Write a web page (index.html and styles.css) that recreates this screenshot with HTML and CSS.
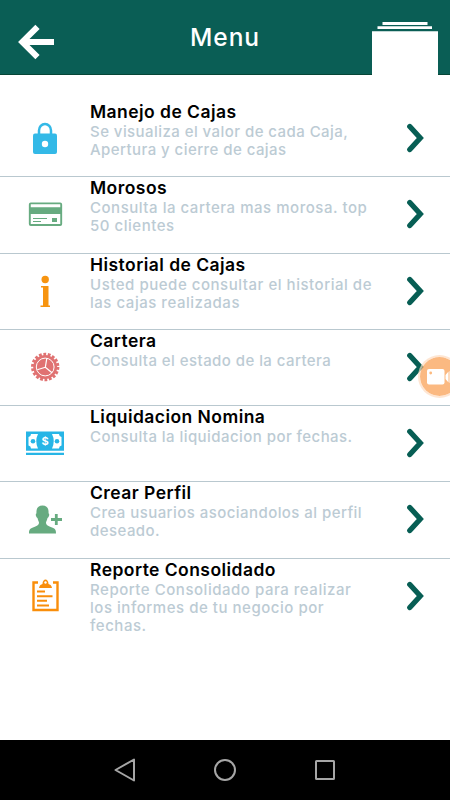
FILE: index.html
```
<!DOCTYPE html>
<html lang="es">
<head>
  <meta charset="UTF-8">
  <meta name="viewport" content="width=device-width, initial-scale=1.0">
  <title>Menu</title>
  <link rel="stylesheet" href="styles.css">
</head>
<body>

  <header class="header">
    <svg class="back" width="36" height="36" viewBox="0 0 36 36">
      <path d="M19.500 2.800L4.300 18l15.200 15.200" fill="none" stroke="#fff" stroke-width="6"/>
      <path d="M4.500 18H36" fill="none" stroke="#fff" stroke-width="6"/>
    </svg>
    <h1>Menu</h1>
    <svg class="stack" width="66" height="54" viewBox="0 0 66 54">
      <path d="M10.500 1h45v3h-45zM5.500 5.300h54.500v2.700H5.500zM0 10.300h66V54H0z" fill="#fff"/>
    </svg>
  </header>

  <main class="menu">
    <div class="item">
      <svg class="icon" width="40" height="40" viewBox="0 0 40 40">
        <path d="M14 16v-4.500a6 6.500 0 0 1 12 0V16" fill="none" stroke="#33b9e7" stroke-width="2.500"/>
        <path d="M10 14.500h20a2 2 0 0 1 2 2V33a2 2 0 0 1-2 2H10a2 2 0 0 1-2-2V16.500a2 2 0 0 1 2-2z" fill="#33b9e7"/>
        <circle cx="20" cy="25" r="3.200" fill="#fff"/>
      </svg>
      <div class="text">
        <h2>Manejo de Cajas</h2>
        <p>Se visualiza el valor de cada Caja,<br>Apertura y cierre de cajas</p>
      </div>
      <svg class="arrow" width="18" height="30" viewBox="0 0 18 30"><path d="M3.800 3.500L14.300 15 3.800 26.500"/></svg>
    </div>

    <div class="item">
      <svg class="icon" width="40" height="40" viewBox="0 0 40 40">
        <rect x="4.800" y="8.400" width="31.400" height="21.600" rx="1" fill="#fff" stroke="#67ab80" stroke-width="1.900"/>
        <path d="M4 12.300h33v6.700H4zM32 23h-5v4h5zM8 23h14v1.100H8zM8 26h8v1.100H8z" fill="#67ab80"/>
      </svg>
      <div class="text">
        <h2>Morosos</h2>
        <p class="wide">Consulta la cartera mas morosa. top<br>50 clientes</p>
      </div>
      <svg class="arrow" width="18" height="30" viewBox="0 0 18 30"><path d="M3.800 3.500L14.300 15 3.800 26.500"/></svg>
    </div>

    <div class="item">
      <svg class="icon" width="40" height="40" viewBox="0 0 40 40">
        <g fill="#f79410">
          <circle cx="20.200" cy="7.500" r="3.700"/>
          <path d="M16 14h7.500v19.500H25V35h-9.500v-1.500H18v-18h-2z"/>
        </g>
      </svg>
      <div class="text">
        <h2>Historial de Cajas</h2>
        <p class="wide">Usted puede consultar el historial de<br>las cajas realizadas</p>
      </div>
      <svg class="arrow" width="18" height="30" viewBox="0 0 18 30"><path d="M3.800 3.500L14.300 15 3.800 26.500"/></svg>
    </div>

    <div class="item">
      <svg class="icon" width="40" height="40" viewBox="0 0 40 40">
        <circle cx="20.200" cy="19" r="12.700" fill="none" stroke="#e07272" stroke-width="3" stroke-dasharray="2.800 1.633"/>
        <circle cx="20.200" cy="19" r="12" fill="#e07272"/>
        <circle cx="20.200" cy="19" r="8.900" fill="none" stroke="#fff" stroke-width="1"/>
        <path d="M20.300 19.300l1.500-9M20.300 19.300l6.700 5.500M20.300 19.300l-8 2.500" fill="none" stroke="#fff" stroke-width="1.200"/>
      </svg>
      <div class="text">
        <h2>Cartera</h2>
        <p>Consulta el estado de la cartera</p>
      </div>
      <svg class="arrow" width="18" height="30" viewBox="0 0 18 30"><path d="M3.800 3.500L14.300 15 3.800 26.500"/></svg>
    </div>

    <div class="item">
      <svg class="icon" width="40" height="40" viewBox="0 0 40 40">
        <path d="M1 7.500h38v19.300H1zM1 28.800h38v2.200H1z" fill="#27b5e6"/>
        <path d="M6 10h7q-3.500 7.200 0 14.400H6q0-2.500-2.500-3v-8.400Q6 12.500 6 10zM34 10h-7q3.500 7.200 0 14.400h7q0-2.500 2.500-3v-8.400Q34 12.500 34 10z" fill="#fff"/>
        <circle cx="8" cy="17.300" r="2.300" fill="#27b5e6"/>
        <circle cx="32" cy="17.300" r="2.300" fill="#27b5e6"/>
        <text class="dollar" x="20" y="21.300">$</text>
      </svg>
      <div class="text">
        <h2>Liquidacion Nomina</h2>
        <p>Consulta la liquidacion por fechas.</p>
      </div>
      <svg class="arrow" width="18" height="30" viewBox="0 0 18 30"><path d="M3.800 3.500L14.300 15 3.800 26.500"/></svg>
    </div>

    <div class="item">
      <svg class="icon" width="40" height="40" viewBox="0 0 40 40">
        <path d="M17.500 5.500c4.500 0 6.500 3 6 8 1.300 0 .7 3.500-1 4.500-.3 2-1.200 3-1.500 4.500 0 3 2.500 3.500 6 5 3.500 1.300 4 2.500 4 6H4c0-3.500.5-4.700 4-6 3.500-1.500 6-2 6-5-.3-1.500-1.200-2.500-1.500-4.500-1.700-1-2.300-4.500-1-4.500-.5-5 1.500-8 6-8z" fill="#67ab80"/>
        <path d="M31.300 14v11M26 19.500h11" stroke="#67ab80" stroke-width="2.800"/>
      </svg>
      <div class="text">
        <h2>Crear Perfil</h2>
        <p>Crea usuarios asociandolos al perfil<br>deseado.</p>
      </div>
      <svg class="arrow" width="18" height="30" viewBox="0 0 18 30"><path d="M3.800 3.500L14.300 15 3.800 26.500"/></svg>
    </div>

    <div class="item">
      <svg class="icon" width="40" height="40" viewBox="0 0 40 40">
        <path d="M13 5.500H8.500v27.500h24V5.500H28" fill="none" stroke="#f98e0b" stroke-width="2.400"/>
        <path d="M14 11c.5-3 2-3.500 3.500-4 0-6 6-6 6 0 1.500.5 3 1 3.500 4zM12 13.500h8v2h-8zM12 18.200h15.500v2H12zM12 22.800h10v2H12zM12 27.500h12v2H12z" fill="#f98e0b"/>
        <circle cx="20.500" cy="5.500" r="1.200" fill="#fff"/>
      </svg>
      <div class="text">
        <h2>Reporte Consolidado</h2>
        <p class="wide">Reporte Consolidado para realizar<br>los informes de tu negocio por<br>fechas.</p>
      </div>
      <svg class="arrow" width="18" height="30" viewBox="0 0 18 30"><path d="M3.800 3.500L14.300 15 3.800 26.500"/></svg>
    </div>
  </main>

  <div class="recorder">
    <svg width="32" height="18" viewBox="0 0 32 18">
      <rect x="0" y="1" width="17.500" height="15.500" rx="2" fill="#fff"/>
      <path d="M18.500 7l3-3.500v11l-3-3.500zM22.500 3.300l3-1v13.400l-3-1z" fill="#fff"/>
      <circle cx="3.700" cy="5" r="1.400" fill="#fcb97e"/>
    </svg>
  </div>

  <nav class="navbar">
    <svg width="24" height="24" viewBox="0 0 24 24"><path d="M21 1.500v21L2.500 12z"/></svg>
    <svg width="24" height="24" viewBox="0 0 24 24"><circle cx="12" cy="12" r="10"/></svg>
    <svg width="24" height="24" viewBox="0 0 24 24"><rect x="3" y="3" width="18" height="18" rx=".5"/></svg>
  </nav>

</body>
</html>
```
FILE: styles.css
```
* {
  box-sizing: border-box;
}

body {
  margin: 0;
  height: 800px;
  display: flex;
  flex-direction: column;
  position: relative;
  overflow: hidden;
  background: #fff;
  font-family: Inter, "Open Sans", sans-serif;
}

h1, h2, p {
  margin: 0;
}

.header {
  height: 75px;
  background: #0a5e55;
  border-bottom: 1px solid #064536;
  display: grid;
  grid-template-columns: 100px 1fr 100px;
  align-items: center;
}

.header h1 {
  color: #fff;
  font-size: 24.500px;
  font-weight: 500;
  text-align: center;
  letter-spacing: 1px;
}

.back {
  margin: 10px 0 0 18px;
}

.stack {
  align-self: end;
  margin: 0 0 -1px 22px;
}

.menu {
  flex: 1;
  padding-top: 26px;
}

.item {
  height: 76.250px;
  display: grid;
  grid-template-columns: 90px 1fr 44px;
  border-bottom: 1px solid #b9c8cf;
}

.item:last-child {
  border-bottom: none;
}

.icon {
  margin: 18px 0 0 25px;
}

.text {
  white-space: nowrap;
}

.text h2 {
  font-size: 17.500px;
  line-height: 22px;
  font-weight: 600;
  letter-spacing: 0.450px;
  color: #000;
}

.text p {
  font-size: 15px;
  line-height: 18px;
  font-weight: 500;
  letter-spacing: 0.440px;
  color: #bccbd4;
}

.text .wide {
  letter-spacing: 0.530px;
}

.arrow {
  margin-top: 22px;
}

.arrow path {
  fill: none;
  stroke: #075e54;
  stroke-width: 5.300;
  stroke-linecap: round;
}

.dollar {
  font-size: 11px;
  font-weight: 700;
  text-anchor: middle;
  fill: #fff;
}

/* floating screen recorder button, runs off the right edge */
.recorder {
  position: absolute;
  left: 418px;
  top: 355px;
  width: 43px;
  height: 43px;
  border-radius: 50%;
  border: 2px solid rgba(253, 220, 192, 0.700);
  background: rgba(250, 168, 97, 0.800);
  background-clip: padding-box;
  padding: 11px 0 0 7px;
}

.navbar {
  height: 60px;
  background: #000;
  display: flex;
  justify-content: center;
  align-items: center;
  gap: 76px;
}

.navbar svg {
  fill: none;
  stroke: #a6a6a6;
  stroke-width: 2;
  stroke-linejoin: round;
}
```
